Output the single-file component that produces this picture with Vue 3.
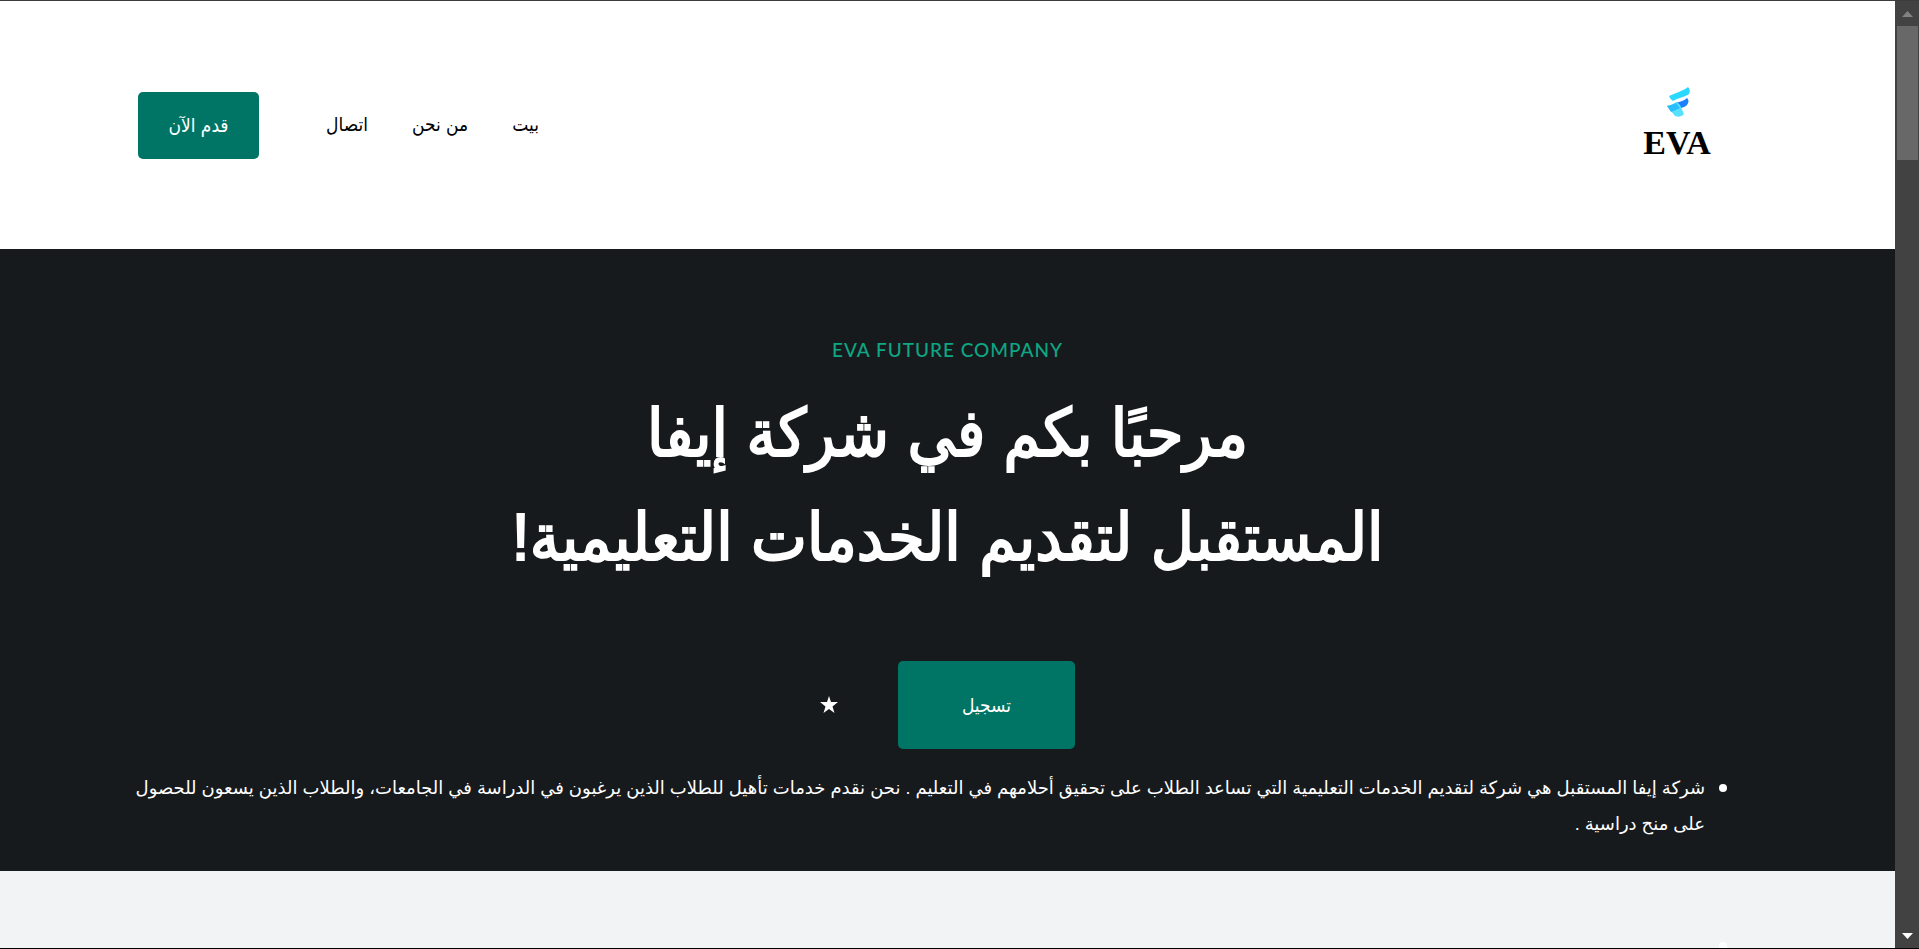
<script setup>
const links = ['بيت', 'من نحن', 'اتصال']
</script>

<template>
  <div class="window">
    <div class="page" dir="rtl">
      <header class="header">
        <a class="logo" href="#" dir="ltr">
          <svg class="mark" viewBox="0 0 24 31" aria-hidden="true">
            <path d="M2 9C8 6 16 4 21 0Q24 3 22 7C18 10 11 11 6 14Q3 12 2 9Z" fill="#2bd9ff" />
            <path d="M8 16C12 15 17 14 20 11Q23 14 20 18C17 21 13 21 10 22Z" fill="#1b80ff" />
            <path d="M0 19Q5 18 10 15L13 18L17 27Q14 31 8 29Z" fill="#56e2ff" />
            <path d="M0 19Q5 18 9 16L13 21Q9 23 4 25Z" fill="#29bdfc" />
          </svg>
          <span class="brand">EVA</span>
        </a>
        <nav class="nav">
          <a v-for="link in links" :key="link" href="#">{{ link }}</a>
          <button class="apply" type="button">قدم الآن</button>
        </nav>
      </header>
      <main>
        <section class="hero">
          <p class="eyebrow" dir="ltr">EVA FUTURE COMPANY</p>
          <h1>مرحبًا بكم في شركة إيفا<br />المستقبل لتقديم الخدمات التعليمية!</h1>
          <div class="actions">
            <button class="register" type="button">تسجيل</button>
            <a class="star" href="#" aria-label="المفضلة">
              <svg viewBox="0 0 18 18" aria-hidden="true">
                <path d="M9 0L11 6H18L12.500 10.500L14.500 17L9 13L3.500 17L5.500 10.500L0 6H7Z" fill="#fff" />
              </svg>
            </a>
          </div>
          <ul class="about">
            <li>شركة إيفا المستقبل هي شركة لتقديم الخدمات التعليمية التي تساعد الطلاب على تحقيق أحلامهم في التعليم . نحن نقدم خدمات تأهيل للطلاب الذين يرغبون في الدراسة في الجامعات، والطلاب الذين يسعون للحصول<br />على منح دراسية .</li>
          </ul>
        </section>
        <section class="next"><i class="dot"></i></section>
      </main>
    </div>
    <div class="scrollbar" aria-hidden="true">
      <svg class="arrow up" viewBox="0 0 11 6"><path d="M0 6L5.500 0L11 6Z" /></svg>
      <div class="thumb"></div>
      <svg class="arrow down" viewBox="0 0 11 6"><path d="M0 0H11L5.500 6Z" /></svg>
    </div>
  </div>
</template>

<style>
body { margin: 0; background: #000; }
</style>

<style scoped>
* { box-sizing: border-box; }
.window {
  display: flex;
  height: 100vh;
  overflow: hidden;
  border-top: 1px solid #3c3c3c;
  border-bottom: 1px solid #000;
  font-family: "Liberation Sans", "DejaVu Sans Condensed", "DejaVu Sans", sans-serif;
}
.page {
  flex: 1;
  min-width: 0;
  display: flex;
  flex-direction: column;
  background: #fff;
}
.header {
  display: flex;
  align-items: center;
  justify-content: space-between;
  height: 248px;
  padding: 0 138px;
}
.logo {
  display: flex;
  flex-direction: column;
  align-items: center;
  width: 160px;
  color: #000;
  text-decoration: none;
}
.mark { width: 24px; height: 31px; margin-left: 4px; }
.brand {
  margin-top: 5px;
  font: 700 34px/40px "Liberation Serif", serif;
}
.nav { display: flex; align-items: center; gap: 44px; }
.nav a { color: #000; font-size: 19px; line-height: 24px; text-decoration: none; }
button {
  border: 0;
  border-radius: 5px;
  background: #007565;
  color: #fff;
  font-family: inherit;
}
.apply {
  width: 121px;
  height: 67px;
  margin-inline-start: 23px;
  padding: 0;
  font-size: 19px;
}
main { flex: 1; display: flex; flex-direction: column; }
.hero {
  display: flex;
  flex-direction: column;
  align-items: center;
  padding: 86px 138px 29px;
  background: #171a1d;
  color: #fff;
}
.eyebrow {
  margin: 0;
  color: #0ea683;
  font: 500 19px/30px Lato, sans-serif;
  letter-spacing: 1px;
}
h1 {
  margin: 16px 0 0;
  font-size: 66px;
  font-weight: 400;
  line-height: 104px;
  text-align: center;
  white-space: nowrap;
  -webkit-text-stroke: 2px #fff;
}
.actions { display: flex; align-items: center; gap: 60px; margin-top: 72px; }
.register { width: 177px; height: 88px; font-size: 19px; }
.star { display: flex; }
.star svg { width: 18px; height: 18px; }
.about {
  align-self: stretch;
  margin: 21px 0 0;
  padding-inline-start: 52px;
  font-family: "Liberation Sans", "DejaVu Sans", sans-serif;
  font-size: 18px;
  line-height: 36px;
  white-space: nowrap;
  list-style: none;
}
.about li { position: relative; }
.about li::before {
  content: "";
  position: absolute;
  right: -22px;
  top: 14px;
  width: 8px;
  height: 8px;
  border-radius: 50%;
  background: #fff;
}
.next { flex: 1; position: relative; background: #f2f3f5; }
.dot {
  position: absolute;
  right: 168px;
  bottom: -2px;
  width: 8px;
  height: 8px;
  border-radius: 50%;
  background: #fff;
}
.scrollbar {
  display: flex;
  flex-direction: column;
  align-items: center;
  width: 24px;
  padding: 10px 1px 9px 2px;
  background: #424242;
}
.arrow { width: 11px; height: 6px; flex: none; }
.up { fill: #828282; }
.down { margin-top: auto; fill: #fff; }
.thumb { width: 100%; height: 134px; margin-top: 9px; background: #686868; }
</style>
